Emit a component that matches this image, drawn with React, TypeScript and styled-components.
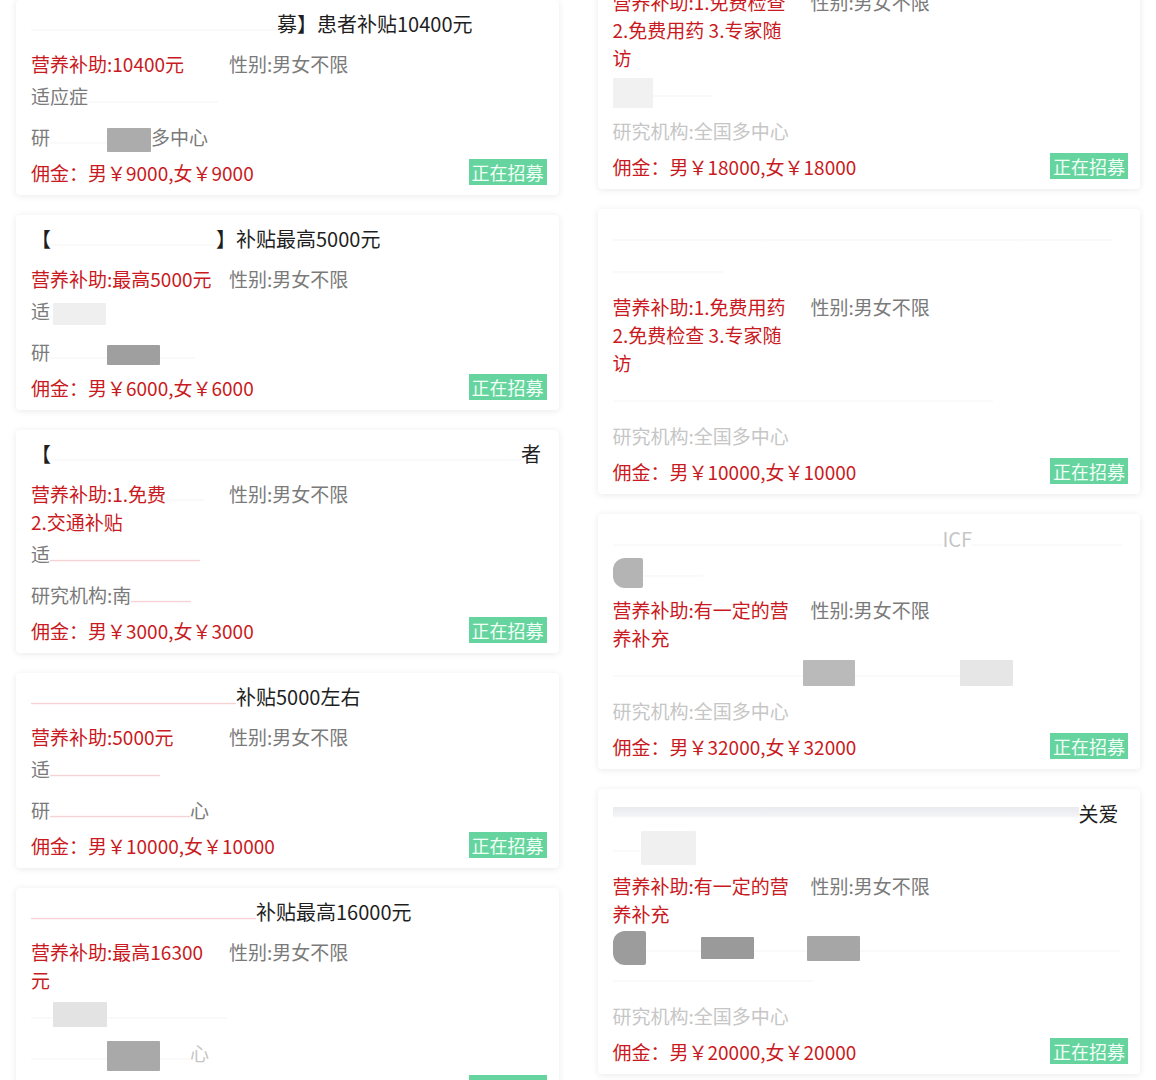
import React from "react";
import styled, { createGlobalStyle } from "styled-components";

const GlobalStyle = createGlobalStyle`
  body {
    margin: 0;
    background: #ffffff;
    font-family: "Noto Sans CJK SC", "Noto Sans", sans-serif;
    overflow: hidden;
  }
`;

const Page = styled.div`
  display: grid;
  grid-template-columns: 1fr 1fr;
  column-gap: 39px;
  padding: 0 16px;
  align-items: start;
`;

const Column = styled.div<{ $offset: number }>`
  display: flex;
  flex-direction: column;
  gap: 20px;
  margin-top: ${(p) => p.$offset}px;
`;

const Card = styled.div`
  background: #fff;
  border-radius: 4px;
  box-shadow: 0 1px 7px rgba(0, 0, 0, 0.09);
  padding: 9px 12px 9px 15px;
  font-size: 19px;
  color: #777;
`;

const Title = styled.div<{ $lh: number }>`
  font-size: 20px;
  line-height: ${(p) => p.$lh}px;
  color: #1f1f1f;
`;

const InfoRow = styled.div`
  display: flex;
  align-items: flex-start;
  margin-top: 11px;
  line-height: 28px;
`;

const Subsidy = styled.div`
  width: 186px;
  margin-right: 12px;
  color: #c91a22;
`;

const Gender = styled.div`
  flex: none;
  color: #7a7a7a;
`;

const Detail = styled.div<{ $gap: number }>`
  margin-top: ${(p) => p.$gap}px;
  line-height: 28px;
  color: #7a7a7a;
`;

const Footer = styled.div`
  display: flex;
  justify-content: space-between;
  align-items: center;
  margin-top: 7px;
  height: 28px;
`;

const Commission = styled.div`
  color: #c91a22;
`;

const Badge = styled.div`
  background: #66d49e;
  color: #f2fff7;
  font-size: 18px;
  line-height: 26px;
  padding: 0 3px;
`;

/* erased parts of the screenshot: a white band with a faint leftover stroke */
const Smear = styled.span<{ $w: number; $tint?: "red" | "gray" | "band" }>`
  display: inline-block;
  width: ${(p) => p.$w}px;
  height: 20px;
  vertical-align: middle;
  background: ${(p) =>
    p.$tint === "red"
      ? "linear-gradient(180deg, transparent 62%, rgba(222,70,80,0.3) 66%, transparent 74%)"
      : p.$tint === "band"
      ? "linear-gradient(180deg, rgba(225,226,232,0.7) 0%, rgba(235,236,240,0.6) 45%, transparent 55%)"
      : "linear-gradient(180deg, transparent 60%, rgba(80,80,80,0.05) 64%, transparent 72%)"};
`;

/* grey mosaic patches left over the redacted text */
const Patch = styled.span<{ $w: number; $h: number; $c: string; $round?: boolean }>`
  display: inline-block;
  width: ${(p) => p.$w}px;
  height: ${(p) => p.$h}px;
  margin: -4px 0;
  background: ${(p) => p.$c};
  vertical-align: middle;
  border-radius: ${(p) => (p.$round ? "12px 2px 2px 12px" : "1px")};
  filter: blur(0.4px);
`;

const Faint = styled.span`
  color: #c6c6c6;
`;

type CardProps = {
  title: React.ReactNode;
  titleLh?: number;
  subsidy: React.ReactNode;
  fit: React.ReactNode;
  org: React.ReactNode;
  male: string;
  female: string;
};

const TrialCard = ({ title, titleLh = 30, subsidy, fit, org, male, female }: CardProps) => (
  <Card>
    <Title $lh={titleLh}>{title}</Title>
    <InfoRow>
      <Subsidy>营养补助:{subsidy}</Subsidy>
      <Gender>性别:男女不限</Gender>
    </InfoRow>
    <Detail $gap={4}>{fit}</Detail>
    <Detail $gap={13}>{org}</Detail>
    <Footer>
      <Commission>
        佣金：男￥{male},女￥{female}
      </Commission>
      <Badge>正在招募</Badge>
    </Footer>
  </Card>
);

const App = () => {
  return (
    <>
      <GlobalStyle />
      <Page>
        <Column $offset={0}>
          <TrialCard
            title={<><Smear $w={246} />募】患者补贴10400元</>}
            subsidy="10400元"
            fit={<>适应症<Smear $w={130} /></>}
            org={<>研<Smear $w={57} /><Patch $w={44} $h={24} $c="#acacac" />多中心</>}
            male="9000"
            female="9000"
          />
          <TrialCard
            title={<>【<Smear $w={165} />】补贴最高5000元</>}
            subsidy="最高5000元"
            fit={<>适<Smear $w={3} /><Patch $w={53} $h={22} $c="#efefef" /></>}
            org={<>研<Smear $w={57} /><Patch $w={53} $h={20} $c="#9f9f9f" /><Smear $w={35} /></>}
            male="6000"
            female="6000"
          />
          <TrialCard
            title={<>【<Smear $w={470} />者</>}
            subsidy={<>1.免费<Smear $w={38} /><br />2.交通补贴</>}
            fit={<>适<Smear $w={150} $tint="red" /></>}
            org={<>研究机构:南<Smear $w={60} $tint="red" /></>}
            male="3000"
            female="3000"
          />
          <TrialCard
            title={<><Smear $w={205} $tint="red" />补贴5000左右</>}
            subsidy="5000元"
            fit={<>适<Smear $w={110} $tint="red" /></>}
            org={<>研<Smear $w={140} $tint="red" />心</>}
            male="10000"
            female="10000"
          />
          <TrialCard
            title={<><Smear $w={225} $tint="red" />补贴最高16000元</>}
            subsidy="最高16300元"
            fit={<><Smear $w={22} /><Patch $w={54} $h={25} $c="#e3e3e3" /><Smear $w={120} /></>}
            org={<><Smear $w={76} /><Patch $w={53} $h={30} $c="#a9a9a9" /><Smear $w={30} /><Faint>心</Faint></>}
            male="4000"
            female="4000"
          />
        </Column>

        <Column $offset={-94}>
          <TrialCard
            titleLh={31}
            title={<><Smear $w={500} /><Smear $w={300} /></>}
            subsidy="1.免费检查 2.免费用药 3.专家随访"
            fit={<><Patch $w={40} $h={30} $c="#f1f1f1" /><Smear $w={60} /></>}
            org={<Faint>研究机构:全国多中心</Faint>}
            male="18000"
            female="18000"
          />
          <TrialCard
            titleLh={32}
            title={<><Smear $w={500} /><Smear $w={110} /></>}
            subsidy="1.免费用药 2.免费检查 3.专家随访"
            fit={<Smear $w={380} />}
            org={<Faint>研究机构:全国多中心</Faint>}
            male="10000"
            female="10000"
          />
          <TrialCard
            titleLh={31}
            title={<><Smear $w={330} /><Faint>ICF</Faint><Smear $w={150} /><Patch $w={30} $h={30} $c="#b4b4b4" $round /><Smear $w={60} /></>}
            subsidy="有一定的营养补充"
            fit={<><Smear $w={190} /><Patch $w={52} $h={26} $c="#bababa" /><Smear $w={105} /><Patch $w={53} $h={26} $c="#e6e6e6" /></>}
            org={<Faint>研究机构:全国多中心</Faint>}
            male="32000"
            female="32000"
          />
          <TrialCard
            titleLh={31}
            title={<><Smear $w={466} $tint="band" />关爱<Smear $w={28} /><Patch $w={55} $h={34} $c="#f0f0f0" /></>}
            subsidy="有一定的营养补充"
            fit={<><Patch $w={33} $h={34} $c="#9c9c9c" $round /><Smear $w={55} /><Patch $w={53} $h={22} $c="#9a9a9a" /><Smear $w={53} /><Patch $w={53} $h={25} $c="#a6a6a6" /><Smear $w={260} /><Smear $w={200} /></>}
            org={<Faint>研究机构:全国多中心</Faint>}
            male="20000"
            female="20000"
          />
        </Column>
      </Page>
    </>
  );
};

export default App;
